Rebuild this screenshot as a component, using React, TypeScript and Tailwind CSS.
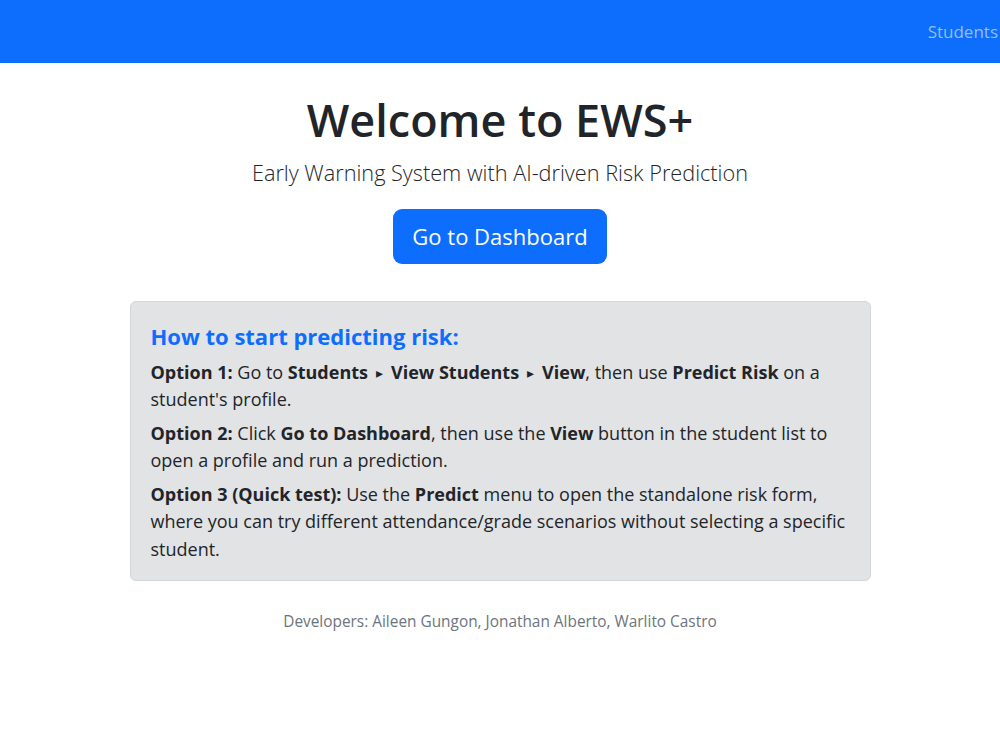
import React from 'react'

const Arrow = () => <span className="mx-[8px] text-[14px] align-[1px]">▸</span>

const steps = [
  {
    label: 'Option 1:',
    body: (
      <>
        Go to <b>Students</b>
        <Arrow />
        <b>View Students</b>
        <Arrow />
        <b>View</b>, then use <b>Predict Risk</b> on a student's profile.
      </>
    ),
  },
  {
    label: 'Option 2:',
    body: (
      <>
        Click <b>Go to Dashboard</b>, then use the <b>View</b> button in the student list to open a profile and
        run a prediction.
      </>
    ),
  },
  {
    label: 'Option 3 (Quick test):',
    body: (
      <>
        Use the <b>Predict</b> menu to open the standalone risk form, where you can try different
        attendance/grade scenarios without selecting a specific student.
      </>
    ),
  },
]

export default function App() {
  return (
    <div className="min-h-screen bg-white font-['Open_Sans','Noto_Sans',sans-serif] text-[#212529]">
      {/* Top navbar */}
      <nav className="flex h-[63px] items-center justify-end bg-[#0d6efd] pr-[2px]">
        <a className="text-[17px] text-[#92befe]">Students</a>
      </nav>

      <main className="flex flex-col items-center pt-[30px] text-center">
        <h1 className="text-[45px] font-semibold leading-[1.2]">Welcome to EWS+</h1>
        <p className="mt-[10px] text-[21.7px] font-light leading-[1.5]">
          Early Warning System with AI-driven Risk Prediction
        </p>
        <button className="mt-[19px] h-[55px] w-[214px] rounded-[9px] bg-[#0d6efd] text-[22px] text-white">
          Go to Dashboard
        </button>

        {/* How-to panel */}
        <div className="mt-[37px] w-[741px] rounded-[6px] border border-[#d3d6d9] bg-[#e2e3e5] px-[20px] pt-[21px] pb-[17px] text-left">
          <h5 className="mb-[10px] text-[22px] font-bold leading-[1.2] text-[#0d6efd]">
            How to start predicting risk:
          </h5>
          {steps.map((s) => (
            <p key={s.label} className="mb-[6px] text-[18px] leading-[27.5px] last:mb-0">
              <b>{s.label}</b> {s.body}
            </p>
          ))}
        </div>

        <p className="mt-[29px] text-[15.4px] text-[#6c757d]">
          Developers: Aileen Gungon, Jonathan Alberto, Warlito Castro
        </p>
      </main>
    </div>
  )
}
